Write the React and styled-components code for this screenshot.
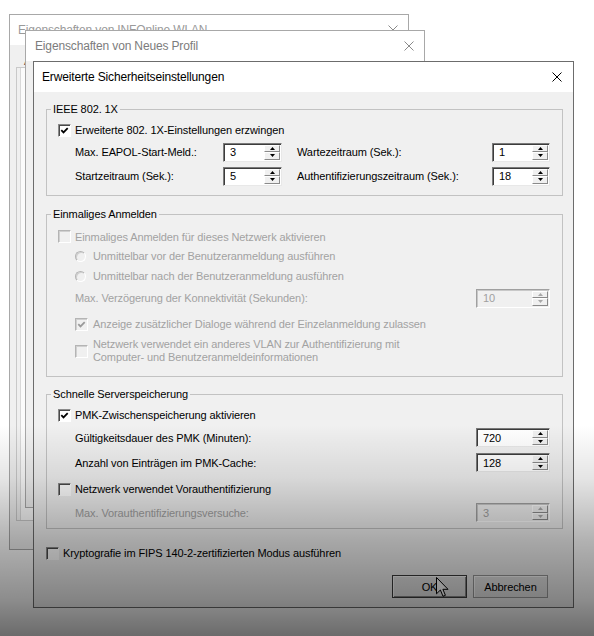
import React from 'react'
import styled, { createGlobalStyle } from 'styled-components'

const GlobalStyle = createGlobalStyle`
  html, body {
    margin: 0;
    padding: 0;
    background: #fff;
  }
  body {
    font-family: "Liberation Sans", Arial, sans-serif;
    font-size: 11px;
    letter-spacing: -0.1px;
    color: #000;
  }
`

const Desktop = styled.div`
  position: relative;
  width: 594px;
  height: 636px;
  overflow: hidden;
  background: #fff;
`

const Window = styled.div`
  position: absolute;
  left: ${p => p.$x}px;
  top: ${p => p.$y}px;
  width: ${p => p.$w}px;
  height: ${p => p.$h}px;
  box-sizing: border-box;
  border: 1px solid ${p => (p.$active ? '#6c6c6c' : '#a8a8a8')};
  background: #f0f0f0;
  display: flex;
  flex-direction: column;
`

const TitleBar = styled.div`
  flex: none;
  height: 30px;
  background: #fff;
  display: flex;
  align-items: center;
  justify-content: space-between;
  padding: 0 ${p => p.$right}px 0 ${p => p.$left}px;
  font-size: 12px;
  letter-spacing: -0.15px;
  color: ${p => p.$color};
`

const CloseIcon = ({ color }) => (
  <svg width="10" height="10" viewBox="0 0 10 10">
    <path d="M0.5 0.5 L9.5 9.5 M9.5 0.5 L0.5 9.5" stroke={color} strokeWidth="1" fill="none" />
  </svg>
)

/* background windows */
const BackBody = styled.div`
  flex: 1;
  display: flex;
  flex-direction: column;
  padding: 6px 6px 28px 6px;
`

const TabStrip = styled.div`
  height: 16px;
  display: flex;
  align-items: flex-end;
  padding-left: 8px;
  color: #444;
`

const TabPanel = styled.div`
  flex: 1;
  border: 1px solid #c9c9c9;
  border-right: none;
  background: #fbfbfb;
  box-shadow: inset 3px 0 0 #f0f0f0, inset 4px 0 0 #d8d8d8;
`

/* main dialog */
const DialogBody = styled.div`
  flex: 1;
  display: flex;
  flex-direction: column;
  padding: 9px 10px 0 12px;
`

const Group = styled.fieldset`
  margin: ${p => p.$mt}px 0 0;
  padding: 0;
  min-width: 0;
  border: 1px solid #c2c2c2;
`

const Legend = styled.legend`
  margin-left: 4px;
  padding: 0 2px;
  line-height: 16px;
  font-size: 11px;
`

const GroupBody = styled.div`
  display: flex;
  flex-direction: column;
  padding: ${p => p.$top}px 12px ${p => p.$bottom}px 11px;
`

const Row = styled.div`
  height: ${p => p.$h}px;
  display: flex;
  align-items: center;
  justify-content: space-between;
  padding-left: ${p => p.$indent || 0}px;
  flex: none;
`

const FieldGrid = styled.div`
  display: grid;
  grid-template-columns: 148px 59px 1fr 58px;
  grid-auto-rows: 24px;
  align-items: center;
  padding-left: 17px;
`

const Label = styled.span`
  color: ${p => (p.$disabled ? '#a2a2a2' : '#000')};
  padding-left: ${p => p.$pad || 0}px;
  line-height: ${p => p.$lh || 14}px;
  white-space: nowrap;
`

const Choice = styled.label`
  display: flex;
  align-items: center;
  gap: ${p => p.$gap}px;
`

const Box = styled.span`
  width: 13px;
  height: 13px;
  box-sizing: border-box;
  flex: none;
  display: flex;
  border: 1px solid;
  border-color: ${p => (p.$disabled ? '#b4b4b4 #fff #fff #b4b4b4' : '#8a8a8a #fff #fff #8a8a8a')};
  box-shadow: ${p => (p.$disabled ? 'inset 1px 1px 0 #d0d0d0' : 'inset 1px 1px 0 #4a4a4a')};
  background: ${p => (p.$disabled ? '#f0f0f0' : '#fff')};
  border-radius: ${p => (p.$round ? '50%' : '0')};
`

const Check = ({ checked, disabled, gap = 4, lh, children }) => (
  <Choice $gap={gap}>
    <Box $disabled={disabled}>
      {checked && (
        <svg width="11" height="11" viewBox="0 0 11 11">
          <path d="M2.3 5.2 L4.5 7.4 L8.7 3.2" stroke={disabled ? '#9a9a9a' : '#000'} strokeWidth="1.8" fill="none" />
        </svg>
      )}
    </Box>
    <Label $disabled={disabled} $lh={lh}>{children}</Label>
  </Choice>
)

const Radio = ({ disabled, children }) => (
  <Choice $gap={7}>
    <Box $round $disabled={disabled} style={{ width: 11, height: 11 }} />
    <Label $disabled={disabled}>{children}</Label>
  </Choice>
)

const SpinBox = styled.div`
  width: ${p => p.$w}px;
  height: 19px;
  box-sizing: border-box;
  display: flex;
  align-items: stretch;
  border: 1px solid;
  border-color: ${p => (p.$disabled ? '#a0a0a0 #fff #fff #a0a0a0' : '#7a7a7a #e8e8e8 #e8e8e8 #7a7a7a')};
  box-shadow: ${p => (p.$disabled ? 'inset 1px 1px 0 #c8c8c8' : 'inset 1px 1px 0 #3c3c3c')};
  background: ${p => (p.$disabled ? '#f0f0f0' : '#fff')};
  padding: 1px;
`

const SpinValue = styled.span`
  flex: 1;
  display: flex;
  align-items: center;
  padding-left: 5px;
  color: ${p => (p.$disabled ? '#a0a0a0' : '#000')};
`

const SpinButtons = styled.div`
  width: 16px;
  display: flex;
  flex-direction: column;
`

const SpinButton = styled.div`
  flex: 1;
  display: flex;
  align-items: center;
  justify-content: center;
  box-sizing: border-box;
  border: 1px solid;
  border-color: #fff #8a8a8a #8a8a8a #fff;
  background: #f0f0f0;
`

const Arrow = ({ down, color }) => (
  <svg width="5" height="3" viewBox="0 0 5 3">
    <path d={down ? 'M0 0 H5 L2.5 3 Z' : 'M0 3 H5 L2.5 0 Z'} fill={color} />
  </svg>
)

const Spin = ({ value, width, disabled }) => {
  const c = disabled ? '#a8a8a8' : '#000'
  return (
    <SpinBox $w={width} $disabled={disabled}>
      <SpinValue $disabled={disabled}>{value}</SpinValue>
      <SpinButtons>
        <SpinButton><Arrow color={c} /></SpinButton>
        <SpinButton><Arrow down color={c} /></SpinButton>
      </SpinButtons>
    </SpinBox>
  )
}

const Buttons = styled.div`
  display: flex;
  justify-content: flex-end;
  gap: 6px;
  margin: 12px 15px 0 0;
`

const Button = styled.button`
  width: 75px;
  height: 23px;
  padding: 0;
  font-family: inherit;
  font-size: 11px;
  letter-spacing: inherit;
  color: #000;
  background: #e6e6e6;
  border: 1px solid ${p => (p.$default ? '#3c3c3c' : '#9a9a9a')};
  box-shadow: ${p => (p.$default ? 'inset 1px 1px 0 #fff, inset -1px -1px 0 #8a8a8a' : 'inset 1px 1px 0 #fff')};
`

const Cursor = styled.svg`
  position: absolute;
  left: 436px;
  top: 577px;
`

const Shade = styled.div`
  position: absolute;
  inset: 0;
  pointer-events: none;
  background: linear-gradient(
    to bottom,
    rgba(0, 0, 0, 0) 0px,
    rgba(0, 0, 0, 0) 425px,
    rgba(0, 0, 0, 0.1) 478px,
    rgba(0, 0, 0, 0.3) 540px,
    rgba(0, 0, 0, 0.45) 600px,
    rgba(0, 0, 0, 0.58) 636px
  );
`

export default function App() {
  return (
    <>
      <GlobalStyle />
      <Desktop>
        <Window $x={9} $y={14} $w={400} $h={536}>
          <TitleBar $left={8} $right={10} $color="#9a9a9a">
            <span>Eigenschaften von INFOnline WLAN</span>
            <CloseIcon color="#8a8a8a" />
          </TitleBar>
          <BackBody>
            <TabStrip>Allgemein</TabStrip>
            <TabPanel />
          </BackBody>
        </Window>

        <Window $x={25} $y={30} $w={400} $h={478}>
          <TitleBar $left={9} $right={10} $color="#7c7c7c">
            <span>Eigenschaften von Neues Profil</span>
            <CloseIcon color="#8a8a8a" />
          </TitleBar>
        </Window>

        <Window $active $x={33} $y={61} $w={541} $h={547}>
          <TitleBar $left={8} $right={11} $color="#000">
            <span>Erweiterte Sicherheitseinstellungen</span>
            <CloseIcon color="#000" />
          </TitleBar>
          <DialogBody>
            <Group $mt={0}>
              <Legend>IEEE 802. 1X</Legend>
              <GroupBody $top={3} $bottom={7}>
                <Row $h={20}>
                  <Check checked>Erweiterte 802. 1X-Einstellungen erzwingen</Check>
                </Row>
                <FieldGrid>
                  <Label>Max. EAPOL-Start-Meld.:</Label>
                  <Spin value="3" width={59} />
                  <Label $pad={15}>Wartezeitraum (Sek.):</Label>
                  <Spin value="1" width={58} />
                  <Label>Startzeitraum (Sek.):</Label>
                  <Spin value="5" width={59} />
                  <Label $pad={15}>Authentifizierungszeitraum (Sek.):</Label>
                  <Spin value="18" width={58} />
                </FieldGrid>
              </GroupBody>
            </Group>

            <Group $mt={10}>
              <Legend>Einmaliges Anmelden</Legend>
              <GroupBody $top={5} $bottom={12}>
                <Row $h={19}>
                  <Check disabled>Einmaliges Anmelden für dieses Netzwerk aktivieren</Check>
                </Row>
                <Row $h={20} $indent={17}>
                  <Radio disabled>Unmittelbar vor der Benutzeranmeldung ausführen</Radio>
                </Row>
                <Row $h={20} $indent={17}>
                  <Radio disabled>Unmittelbar nach der Benutzeranmeldung ausführen</Radio>
                </Row>
                <Row $h={24} $indent={17}>
                  <Label $disabled>Max. Verzögerung der Konnektivität (Sekunden):</Label>
                  <Spin value="10" width={74} disabled />
                </Row>
                <Row $h={28} $indent={17}>
                  <Check checked disabled gap={5}>
                    Anzeige zusätzlicher Dialoge während der Einzelanmeldung zulassen
                  </Check>
                </Row>
                <Row $h={26} $indent={17}>
                  <Check disabled gap={5} lh={13}>
                    Netzwerk verwendet ein anderes VLAN zur Authentifizierung mit
                    <br />
                    Computer- und Benutzeranmeldeinformationen
                  </Check>
                </Row>
              </GroupBody>
            </Group>

            <Group $mt={9}>
              <Legend>Schnelle Serverspeicherung</Legend>
              <GroupBody $top={3} $bottom={6}>
                <Row $h={20}>
                  <Check checked>PMK-Zwischenspeicherung aktivieren</Check>
                </Row>
                <Row $h={25} $indent={17}>
                  <Label>Gültigkeitsdauer des PMK (Minuten):</Label>
                  <Spin value="720" width={74} />
                </Row>
                <Row $h={25} $indent={17}>
                  <Label>Anzahl von Einträgen im PMK-Cache:</Label>
                  <Spin value="128" width={74} />
                </Row>
                <Row $h={28}>
                  <Check>Netzwerk verwendet Vorauthentifizierung</Check>
                </Row>
                <Row $h={19} $indent={17}>
                  <Label $disabled>Max. Vorauthentifizierungsversuche:</Label>
                  <Spin value="3" width={74} disabled />
                </Row>
              </GroupBody>
            </Group>

            <Row $h={20} style={{ marginTop: 14 }}>
              <Check>Kryptografie im FIPS 140-2-zertifizierten Modus ausführen</Check>
            </Row>

            <Buttons>
              <Button $default>OK</Button>
              <Button>Abbrechen</Button>
            </Buttons>
          </DialogBody>
        </Window>

        <Cursor width="13" height="21" viewBox="0 0 13 21">
          <path
            d="M0.5 0.5 V16.8 L4.4 13 L7 19.3 L9.4 18.3 L6.9 12.3 H12 Z"
            fill="#fff"
            stroke="#000"
            strokeWidth="1"
            strokeLinejoin="round"
          />
        </Cursor>
        <Shade />
      </Desktop>
    </>
  )
}
